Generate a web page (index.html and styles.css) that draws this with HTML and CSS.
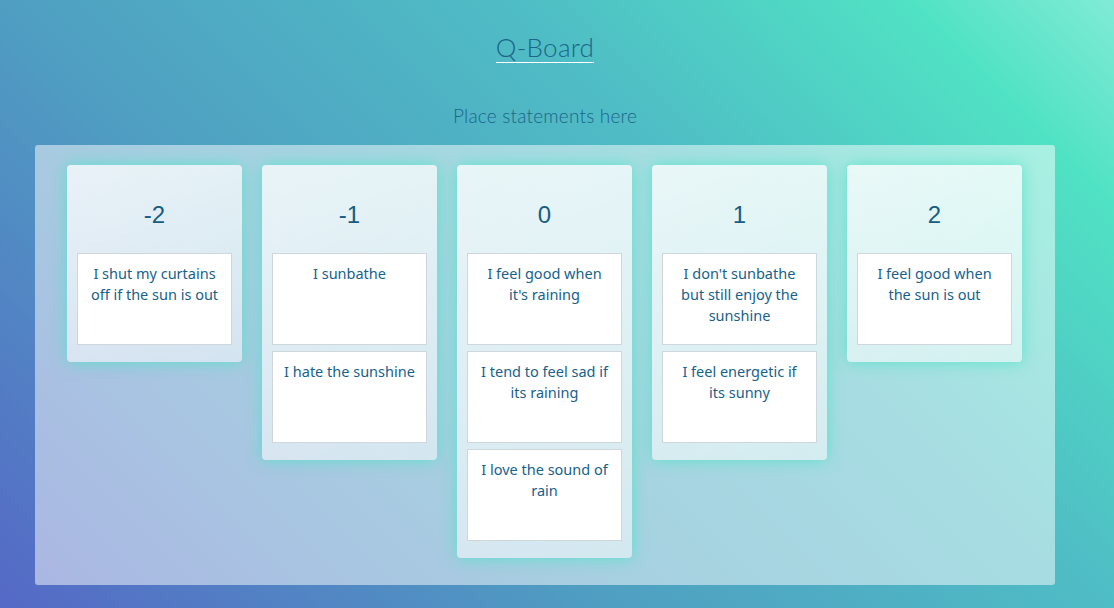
FILE: index.html
```html
<!DOCTYPE html>
<html>
<head>
<meta charset="utf-8">
<title>Q-Board</title>
<link rel="stylesheet" href="styles.css">
</head>
<body>
<div class="page">
  <header class="top">
    <h1 class="title"><span class="title-text">Q-Board</span></h1>
    <p class="subtitle">Place statements here</p>
  </header>
  <main class="board">
    <section class="col">
      <h2 class="col-head">-2</h2>
      <div class="card">I shut my curtains off if the sun is out</div>
    </section>
    <section class="col">
      <h2 class="col-head">-1</h2>
      <div class="card">I sunbathe</div>
      <div class="card">I hate the sunshine</div>
    </section>
    <section class="col">
      <h2 class="col-head">0</h2>
      <div class="card">I feel good when it's raining</div>
      <div class="card">I tend to feel sad if its raining</div>
      <div class="card">I love the sound of rain</div>
    </section>
    <section class="col">
      <h2 class="col-head">1</h2>
      <div class="card">I don't sunbathe but still enjoy the sunshine</div>
      <div class="card">I feel energetic if its sunny</div>
    </section>
    <section class="col">
      <h2 class="col-head">2</h2>
      <div class="card">I feel good when the sun is out</div>
    </section>
  </main>
</div>
</body>
</html>
```
FILE: styles.css
```css
html, body {
  margin: 0;
  padding: 0;
}
body {
  width: 1114px;
  height: 608px;
  overflow: hidden;
  background: linear-gradient(45deg, #5568c6 0%, #4f9ec2 35%, #4fbdc5 65%, #50e2c4 88%, #80ebd6 100%);
  font-family: "Lato", "Liberation Sans", sans-serif;
}
.page {
  width: 1090px;
  display: flex;
  flex-direction: column;
}
.top {
  display: flex;
  flex-direction: column;
  align-items: center;
}
.title {
  margin: 33px 0 0;
  font-size: 26px;
  font-weight: 300;
  color: #1b6688;
  line-height: 28px;
}
.title-text {
  display: inline-block;
  border-bottom: 1px solid #ffffff;
  padding-bottom: 1px;
  letter-spacing: 0.3px;
}
.subtitle {
  margin: 42px 0 0;
  font-size: 19px;
  font-weight: 300;
  color: #1b6688;
  line-height: 22px;
  letter-spacing: 0.2px;
}
.board {
  margin: 18px 35px 0 35px;
  height: 440px;
  box-sizing: border-box;
  padding: 20px 32px;
  background: rgba(255, 255, 255, 0.5);
  border-radius: 3px;
  display: flex;
  align-items: flex-start;
  gap: 20px;
}
.col {
  width: 175px;
  box-sizing: border-box;
  padding: 0 10px 17px;
  background: linear-gradient(160deg, rgba(255,255,255,0.75), rgba(255,255,255,0.5));
  border-radius: 4px;
  box-shadow: 0 0 16px rgba(80, 228, 200, 0.85);
  display: flex;
  flex-direction: column;
  gap: 6px;
}
.col-head {
  margin: 0;
  padding: 36px 0 18px;
  line-height: 28px;
  font-family: "Liberation Sans", Arial, sans-serif;
  font-weight: 400;
  font-size: 24px;
  color: #175c84;
  text-align: center;
}
.card {
  height: 92px;
  box-sizing: border-box;
  background: #ffffff;
  border: 1px solid #cfd6dc;
  padding: 9px 10px;
  font-family: "Noto Sans", "Open Sans", sans-serif;
  font-size: 14.5px;
  line-height: 21px;
  color: #17628c;
  text-align: center;
}
```
